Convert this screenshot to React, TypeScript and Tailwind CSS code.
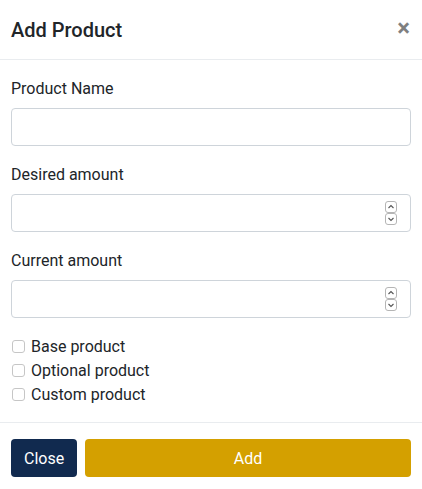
import React from 'react';

const Spinner = () => (
  <div className="pointer-events-none absolute right-[14px] top-1/2 flex -translate-y-1/2 flex-col">
    <svg width="12" height="12" viewBox="0 0 12 12">
      <rect x="0.5" y="0.5" width="11" height="11" rx="2.5" fill="#fff" stroke="#b5b5b5" />
      <path d="M3.5 7l2.5-2.5 2.5 2.5" fill="none" stroke="#555" strokeWidth="1.1" />
    </svg>
    <svg width="12" height="12" viewBox="0 0 12 12">
      <rect x="0.5" y="0.5" width="11" height="11" rx="2.5" fill="#fff" stroke="#b5b5b5" />
      <path d="M3.5 5l2.5 2.5 2.5-2.5" fill="none" stroke="#555" strokeWidth="1.1" />
    </svg>
  </div>
);

const Field: React.FC<{ label: string; number?: boolean }> = ({ label, number }) => (
  <div className="flex flex-col">
    <label className="mb-[7px] pt-[1px] leading-6">{label}</label>
    <div className="relative">
      <input
        type="text"
        className="h-[38px] w-full rounded border border-[#ced4da] bg-white px-3 text-base outline-none"
      />
      {number && <Spinner />}
    </div>
  </div>
);

const Check: React.FC<{ label: string }> = ({ label }) => (
  <label className="flex h-6 items-center pt-[1px]">
    <input
      type="checkbox"
      className="ml-[1px] mr-[6px] h-[13px] w-[13px] appearance-none rounded-[3px] border border-[#c6c6c6] bg-white"
    />
    <span>{label}</span>
  </label>
);

export default function App() {
  return (
    <div className="h-[489px] w-[422px] bg-white text-base text-[#212529] font-['Roboto',sans-serif]">
      <div className="flex h-[60px] items-center justify-between border-b border-[#e9ecef] px-[11px]">
        <h5 className="text-xl font-medium leading-[30px]">Add Product</h5>
        <button className="-mt-[3px] mr-[1px] text-2xl font-bold leading-none text-black/50">×</button>
      </div>

      <div className="flex flex-col gap-4 px-[11px] py-4">
        <Field label="Product Name" />
        <Field label="Desired amount" number />
        <Field label="Current amount" number />
        <div className="flex flex-col">
          <Check label="Base product" />
          <Check label="Optional product" />
          <Check label="Custom product" />
        </div>
      </div>

      <div className="flex gap-2 border-t border-[#e9ecef] px-[11px] pt-4">
        <button className="h-[38px] rounded bg-[#112a4f] px-[13px] pt-[1px] text-white">Close</button>
        <button className="h-[38px] flex-1 rounded bg-[#d4a000] pt-[1px] text-white">Add</button>
      </div>
    </div>
  );
}
